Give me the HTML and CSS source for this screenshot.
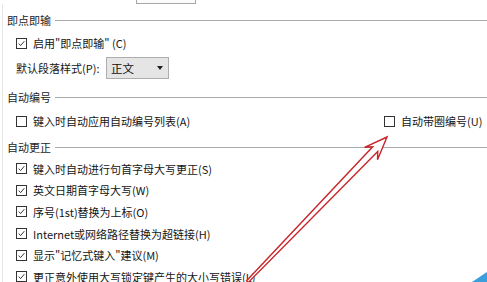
FILE: index.html
```html
<!DOCTYPE html>
<html lang="zh-CN">
<head>
<meta charset="utf-8">
<title>选项</title>
<link rel="stylesheet" href="styles.css">
</head>
<body>
<div class="page">
  <div class="stub"><div class="stub-btn"></div></div>
  <div class="panel">
    <div class="hdr"><span>即点即输</span><div class="rule"></div></div>
    <div class="row r1">
      <span class="cb on"><svg viewBox="0 0 11 11"><polyline points="2,5.6 4.5,8 9,2.6"/></svg></span>
      <span class="lbl">启用"即点即输" (C)</span>
    </div>
    <div class="row r2">
      <span class="plain">默认段落样式(P):</span>
      <div class="select"><span>正文</span><span class="caret"></span></div>
    </div>
    <div class="hdr h2"><span>自动编号</span><div class="rule"></div></div>
    <div class="row r3 split">
      <div class="item">
        <span class="cb"></span>
        <span class="lbl">键入时自动应用自动编号列表(A)</span>
      </div>
      <div class="item">
        <span class="cb"></span>
        <span class="lbl">自动带圈编号(U)</span>
      </div>
    </div>
    <div class="hdr h3"><span>自动更正</span><div class="rule"></div></div>
    <div class="list">
      <div class="row lr"><span class="cb on"><svg viewBox="0 0 11 11"><polyline points="2,5.6 4.5,8 9,2.6"/></svg></span><span class="lbl">键入时自动进行句首字母大写更正(S)</span></div>
      <div class="row lr"><span class="cb on"><svg viewBox="0 0 11 11"><polyline points="2,5.6 4.5,8 9,2.6"/></svg></span><span class="lbl">英文日期首字母大写(W)</span></div>
      <div class="row lr"><span class="cb on"><svg viewBox="0 0 11 11"><polyline points="2,5.6 4.5,8 9,2.6"/></svg></span><span class="lbl">序号(1st)替换为上标(O)</span></div>
      <div class="row lr"><span class="cb on"><svg viewBox="0 0 11 11"><polyline points="2,5.6 4.5,8 9,2.6"/></svg></span><span class="lbl">Internet或网络路径替换为超链接(H)</span></div>
      <div class="row lr"><span class="cb on"><svg viewBox="0 0 11 11"><polyline points="2,5.6 4.5,8 9,2.6"/></svg></span><span class="lbl">显示"记忆式键入"建议(M)</span></div>
      <div class="row lr"><span class="cb on"><svg viewBox="0 0 11 11"><polyline points="2,5.6 4.5,8 9,2.6"/></svg></span><span class="lbl">更正意外使用大写锁定键产生的大小写错误(L)</span></div>
    </div>
  </div>
  <svg class="overlay" viewBox="0 0 487 282" width="487" height="282">
    <polygon class="arrow" points="387,137 377.5,159.8 377.7,151.6 248.3,282.4 246.6,280.8 372.7,146.8 364.6,147.3"/>
    <polygon class="corner" points="472,282 487,272 487,282"/>
  </svg>
</div>
</body>
</html>
```
FILE: styles.css
```css
* { box-sizing: border-box; }
html, body { margin: 0; padding: 0; background: #ffffff; }
body {
  width: 487px;
  height: 282px;
  overflow: hidden;
  font-family: "Noto Sans CJK SC", "Noto Sans", sans-serif;
  font-size: 11px;
  color: #151515;
}
.page { position: relative; width: 487px; height: 282px; overflow: hidden; }
.stub { height: 4px; }
.stub-btn {
  margin-left: 136px;
  width: 60px;
  height: 4px;
  border: 1px solid #a8a8a8;
  border-top: none;
  background: #fbfbfb;
}
.panel {
  margin-left: 2px;
  border-left: 1px solid #e6e6e6;
  padding-left: 4px;
  display: flex;
  flex-direction: column;
}
.hdr {
  display: flex;
  align-items: center;
  height: 22px;
  margin-top: 5px;
  color: #242424;
  flex: none;
}
.hdr.h2 { margin-top: 7px; }
.hdr.h3 { margin-top: 4px; }
.rule {
  flex: 1;
  height: 1px;
  background: #ababab;
  margin-left: 4px;
}
.row {
  display: flex;
  align-items: center;
  height: 22px;
  padding-left: 9px;
  flex: none;
}
.r1 { margin-top: 1px; }
.r2 { margin-top: 3px; }
.r3 { margin-top: 2px; }
.split { display: grid; grid-template-columns: 368px 1fr; }
.item { display: flex; align-items: center; }
.cb {
  width: 11px;
  height: 11px;
  border: 1px solid #333333;
  background: #ffffff;
  flex: none;
  display: flex;
}
.cb svg { width: 9px; height: 9px; }
.cb polyline { fill: none; stroke: #222222; stroke-width: 1.1; }
.lbl { margin-left: 6px; white-space: nowrap; }
.plain { white-space: nowrap; width: 90px; }
.select {
  width: 63px;
  height: 22px;
  border: 1px solid #adadad;
  background: #e5e5e5;
  display: flex;
  align-items: center;
  justify-content: space-between;
  padding: 0 5px 0 4px;
  font-size: 11.5px;
  color: #111;
}
.caret {
  width: 0;
  height: 0;
  border-left: 3.5px solid transparent;
  border-right: 3.5px solid transparent;
  border-top: 4px solid #222;
}
.list { display: flex; flex-direction: column; flex: none; }
.lr { height: 21.6px; }
.overlay { position: absolute; left: 0; top: 0; pointer-events: none; }
.arrow { fill: #ffffff; stroke: #c8242a; stroke-width: 1.4; stroke-linejoin: miter; }
.corner { fill: #3a9fdc; }
```
